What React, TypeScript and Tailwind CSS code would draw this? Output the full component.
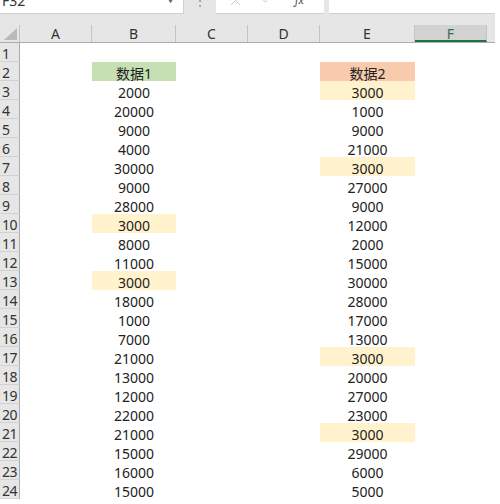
import { X, Check } from "lucide-react";

type Fill = "green" | "salmon" | "yellow" | undefined;

const colB: [string, Fill][] = [
  ["", undefined],
  ["数据1", "green"],
  ["2000", undefined],
  ["20000", undefined],
  ["9000", undefined],
  ["4000", undefined],
  ["30000", undefined],
  ["9000", undefined],
  ["28000", undefined],
  ["3000", "yellow"],
  ["8000", undefined],
  ["11000", undefined],
  ["3000", "yellow"],
  ["18000", undefined],
  ["1000", undefined],
  ["7000", undefined],
  ["21000", undefined],
  ["13000", undefined],
  ["12000", undefined],
  ["22000", undefined],
  ["21000", undefined],
  ["15000", undefined],
  ["16000", undefined],
  ["15000", undefined],
];

const colE: [string, Fill][] = [
  ["", undefined],
  ["数据2", "salmon"],
  ["3000", "yellow"],
  ["1000", undefined],
  ["9000", undefined],
  ["21000", undefined],
  ["3000", "yellow"],
  ["27000", undefined],
  ["9000", undefined],
  ["12000", undefined],
  ["2000", undefined],
  ["15000", undefined],
  ["30000", undefined],
  ["28000", undefined],
  ["17000", undefined],
  ["13000", undefined],
  ["3000", "yellow"],
  ["20000", undefined],
  ["27000", undefined],
  ["23000", undefined],
  ["3000", "yellow"],
  ["29000", undefined],
  ["6000", undefined],
  ["5000", undefined],
];

const fillClass = (f: Fill) =>
  f === "green"
    ? "bg-[#c6e0b4]"
    : f === "salmon"
      ? "bg-[#f8cbad]"
      : f === "yellow"
        ? "bg-[#fff2cc]"
        : "bg-white";

function Cell({ value, fill, width }: { value: string; fill: Fill; width: string }) {
  return (
    <div className={`${width} h-[19px] shrink-0 pt-[4px] text-center text-[14px] leading-[15px] text-[#222] ${fillClass(fill)}`}>
      {value}
    </div>
  );
}

const headers = [
  { label: "A", width: "w-[72px]" },
  { label: "B", width: "w-[84px]" },
  { label: "C", width: "w-[72px]" },
  { label: "D", width: "w-[72px]" },
  { label: "E", width: "w-[95px]" },
];

export default function App() {
  return (
    <div
      className="relative h-[504px] w-[500px] overflow-hidden bg-white"
      style={{ fontFamily: '"Noto Sans", "Noto Sans CJK SC", sans-serif' }}
    >
      <div className="w-[495px] bg-[#e6e6e6]">
        {/* formula bar, cut at the top */}
        <div className="flex h-[14px]">
          <div className="flex w-[184px] shrink-0 items-start justify-between overflow-hidden border-b border-r border-[#d0d0d0] bg-white pl-[2px] pr-[8px]">
            <span className="-mt-[9px] text-[14px] leading-[19px] text-[#333]">F32</span>
            <span className="-mt-[5px] text-[9px] leading-[10px] text-[#666]">▼</span>
          </div>
          <div className="flex w-[32px] shrink-0 justify-center overflow-hidden">
            <span className="-mt-[6px] text-[12px] leading-[14px] text-[#8a8a8a]">⋮</span>
          </div>
          <div className="flex w-[108px] shrink-0 items-start overflow-hidden border-b border-[#d0d0d0] bg-white">
            <X size={17} strokeWidth={1.3} className="-mt-[8px] ml-[11px] text-[#c4c4c4]" />
            <Check size={17} strokeWidth={1.3} className="-mt-[10px] ml-[15px] text-[#c4c4c4]" />
            <span className="-mt-[7px] ml-[19px] font-serif text-[12px] italic leading-[14px] text-[#555]">fx</span>
          </div>
          <div className="w-[5px] shrink-0" />
          <div className="flex-1 border-b border-[#d0d0d0] bg-white" />
        </div>
        <div className="h-[11px]" />
        {/* column headers */}
        <div className="flex h-[18px] border-b border-[#ababab]">
          <div className="flex w-[20px] shrink-0 items-end justify-end border-r border-[#c4c4c4] pb-[2px] pr-[2px]">
            <svg width="13" height="12" viewBox="0 0 13 12">
              <polygon points="13,0 13,12 0,12" fill="#b9b9b9" />
            </svg>
          </div>
          {headers.map((h) => (
            <div
              key={h.label}
              className={`${h.width} shrink-0 border-r border-[#c4c4c4] pt-[1px] text-center text-[14px] leading-[16px] text-[#333]`}
            >
              {h.label}
            </div>
          ))}
          <div className="w-[72px] shrink-0 border-b-2 border-r border-b-[#217346] border-r-[#c4c4c4] bg-[#d2d2d2] pt-[1px] text-center text-[14px] leading-[15px] text-[#3b6b4b]">
            F
          </div>
          <div className="flex-1" />
        </div>
      </div>
      {/* rows */}
      <div className="w-[495px]">
        {colB.map(([b, bf], i) => (
          <div key={i} className="flex">
            <div className="h-[19px] w-[20px] shrink-0 overflow-hidden border-b border-r border-b-[#d2d2d2] border-r-[#ababab] bg-[#e6e6e6] pl-[2px] pt-[4px] text-[14px] leading-[14px] tracking-[-0.5px] text-[#333]">
              {i + 1}
            </div>
            <Cell value="" fill={undefined} width="w-[72px]" />
            <Cell value={b} fill={bf} width="w-[84px]" />
            <Cell value="" fill={undefined} width="w-[72px]" />
            <Cell value="" fill={undefined} width="w-[72px]" />
            <Cell value={colE[i][0]} fill={colE[i][1]} width="w-[95px]" />
            <Cell value="" fill={undefined} width="w-[72px]" />
          </div>
        ))}
      </div>
    </div>
  );
}
